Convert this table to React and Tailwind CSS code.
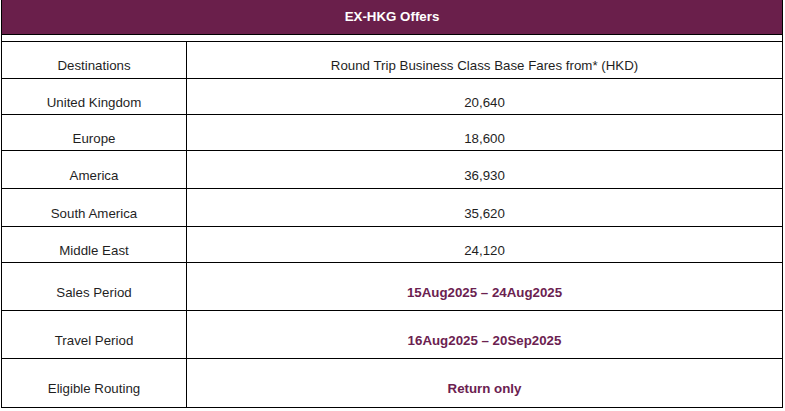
const rows = [
  { label: "United Kingdom", value: "20,640", h: "h-[36px]" },
  { label: "Europe", value: "18,600", h: "h-[36px]" },
  { label: "America", value: "36,930", h: "h-[38px]" },
  { label: "South America", value: "35,620", h: "h-[38px]" },
  { label: "Middle East", value: "24,120", h: "h-[36px]" },
  { label: "Sales Period", value: "15Aug2025 – 24Aug2025", h: "h-[48px]", strong: true },
  { label: "Travel Period", value: "16Aug2025 – 20Sep2025", h: "h-[48px]", strong: true },
  { label: "Eligible Routing", value: "Return only", h: "h-[49px]", strong: true },
];

const Row = ({ label, value, h, strong }) => (
  <div className={`grid grid-cols-[185px_1fr] border-b border-black ${h}`}>
    <div className="flex items-center justify-center border-r border-black">
      <span className="pt-3 leading-4">{label}</span>
    </div>
    <div className="flex items-center justify-center">
      <span
        className={`pt-3 leading-4 ${
          strong ? "font-bold text-[#6b2150]" : ""
        }`}
      >
        {value}
      </span>
    </div>
  </div>
);

export default function App() {
  return (
    <div className="min-h-[411px] bg-white font-['Liberation_Sans',Arial,sans-serif] text-[13.3px] text-[#1f1f1f]">
      <div className="ml-px w-[782px] border-x border-black">
        {/* Title bar */}
        <div className="flex h-[35px] items-center justify-center border-b border-black bg-[#6a1f4b] pb-px">
          <span className="font-bold text-white">EX-HKG Offers</span>
        </div>
        <div className="h-[7px] border-b border-black" />

        {/* Column headings */}
        <div className="grid h-[37px] grid-cols-[185px_1fr] border-b border-black">
          <div className="flex items-center justify-center border-r border-black">
            <span className="pt-3 leading-4">Destinations</span>
          </div>
          <div className="flex items-center justify-center">
            <span className="pt-3 leading-4">
              Round Trip Business Class Base Fares from* (HKD)
            </span>
          </div>
        </div>

        {rows.map((r) => (
          <Row key={r.label} {...r} />
        ))}
      </div>
    </div>
  );
}
